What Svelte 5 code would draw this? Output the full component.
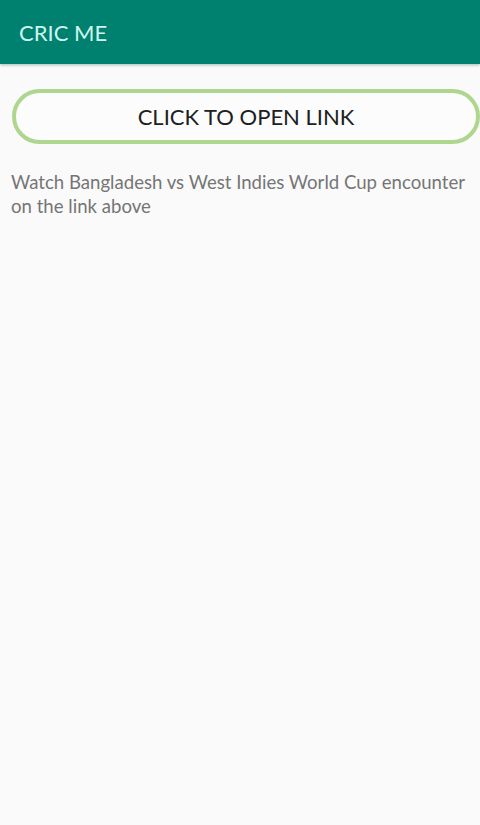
<script lang="ts">
  const title = 'CRIC ME'
  const linkLabel = 'CLICK TO OPEN LINK'
  const message = 'Watch Bangladesh vs West Indies World Cup encounter on the link above'
</script>

<div class="screen">
  <header class="appbar">
    <span class="title">{title}</span>
  </header>
  <main class="content">
    <button class="link-btn">{linkLabel}</button>
    <p class="message">{message}</p>
  </main>
</div>

<style>
  :global(body) {
    margin: 0;
    background: #fafafa;
  }
  .screen {
    width: 480px;
    height: 825px;
    overflow: hidden;
    display: flex;
    flex-direction: column;
    background: #fafafa;
    font-family: "Lato", "Open Sans", sans-serif;
  }
  .appbar {
    height: 64px;
    flex: none;
    display: flex;
    align-items: center;
    padding: 0 19px;
    background: #00806e;
    box-shadow: 0 1px 3px rgba(0, 60, 60, 0.35);
  }
  .title {
    color: #cdf5ee;
    font-size: 22px;
  }
  .content {
    padding: 25px 0 0 12px;
  }
  .link-btn {
    display: block;
    box-sizing: border-box;
    width: 468px;
    height: 55px;
    padding: 0;
    border: 4px solid #aed68e;
    border-radius: 28px;
    background: #fcfcfc;
    color: #202020;
    font-family: inherit;
    font-size: 22px;
  }
  .message {
    margin: 26px 0 0 -1px;
    width: 462px;
    color: #757575;
    font-size: 18.6px;
    line-height: 24px;
  }
</style>
